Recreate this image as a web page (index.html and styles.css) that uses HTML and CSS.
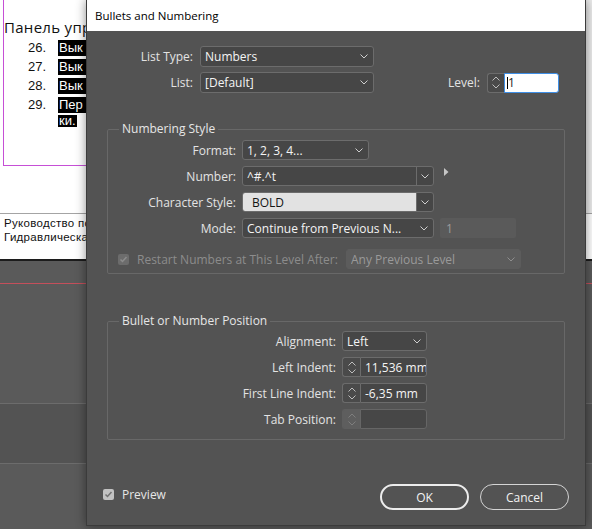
FILE: index.html
```html
<!DOCTYPE html>
<html lang="ru">
<head>
<meta charset="utf-8">
<title>Bullets and Numbering</title>
<link rel="stylesheet" href="styles.css">
</head>
<body>
<div class="desk">
  <div class="doc">
    <div class="page">
      <div class="frame">
        <p class="heading">Панель упр</p>
        <ol class="steps">
          <li><span class="num">26.</span><span class="txt"><span class="hl cut">Вык</span></span></li>
          <li><span class="num">27.</span><span class="txt"><span class="hl cut">Вык</span></span></li>
          <li><span class="num">28.</span><span class="txt"><span class="hl cut">Вык</span></span></li>
          <li><span class="num">29.</span><span class="txt"><span class="hl cut">Пер</span><span class="hl short">ки.</span></span></li>
        </ol>
      </div>
    </div>
    <div class="doc-foot">
      <p>Руководство по</p>
      <p>Гидравлическа</p>
    </div>
  </div>
  <div class="panel">
    <div class="band-a"></div>
    <div class="band-b"></div>
    <div class="band-c"></div>
  </div>

  <div class="dialog">
    <div class="titlebar">Bullets and Numbering</div>
    <div class="dlg-body">
      <div class="top">
        <div class="trow">
          <span class="tlabel">List Type:</span>
          <div class="select w174"><span class="val">Numbers</span><svg class="chev" width="8" height="5" viewBox="0 0 8 5"><path d="M0.5 0.5L4 4L7.5 0.5" fill="none" stroke="#cfcfcf"/></svg></div>
        </div>
        <div class="trow">
          <span class="tlabel">List:</span>
          <div class="select w174"><span class="val">[Default]</span><svg class="chev" width="8" height="5" viewBox="0 0 8 5"><path d="M0.5 0.5L4 4L7.5 0.5" fill="none" stroke="#cfcfcf"/></svg></div>
          <div class="level">
            <span class="lvl-label">Level:</span>
            <div class="spin">
              <span class="spin-btn s17"><svg width="8" height="5" viewBox="0 0 8 5"><path d="M0.5 4.5L4 1L7.5 4.5" fill="none" stroke="#bdbdbd"/></svg><svg width="8" height="5" viewBox="0 0 8 5"><path d="M0.5 0.5L4 4L7.5 0.5" fill="none" stroke="#bdbdbd"/></svg></span>
              <span class="spin-field focus w55"><span class="caret"></span>1</span>
            </div>
          </div>
        </div>
      </div>

      <fieldset class="group g1">
        <legend>Numbering Style</legend>
        <div class="frow">
          <span class="flabel">Format:</span>
          <div class="select w127"><span class="val">1, 2, 3, 4...</span><svg class="chev" width="8" height="5" viewBox="0 0 8 5"><path d="M0.5 0.5L4 4L7.5 0.5" fill="none" stroke="#cfcfcf"/></svg></div>
        </div>
        <div class="frow">
          <span class="flabel">Number:</span>
          <div class="combo"><span class="field">^#.^t</span><span class="drop"><svg width="8" height="5" viewBox="0 0 8 5"><path d="M0.5 0.5L4 4L7.5 0.5" fill="none" stroke="#cfcfcf"/></svg></span></div>
          <svg class="tri" width="5" height="8" viewBox="0 0 5 8"><path d="M0 0L4.5 4L0 8Z" fill="#c6c6c6"/></svg>
        </div>
        <div class="frow">
          <span class="flabel">Character Style:</span>
          <div class="combo"><span class="field light">BOLD</span><span class="drop"><svg width="8" height="5" viewBox="0 0 8 5"><path d="M0.5 0.5L4 4L7.5 0.5" fill="none" stroke="#cfcfcf"/></svg></span></div>
        </div>
        <div class="frow">
          <span class="flabel">Mode:</span>
          <div class="select w192"><span class="val">Continue from Previous N...</span><svg class="chev" width="8" height="5" viewBox="0 0 8 5"><path d="M0.5 0.5L4 4L7.5 0.5" fill="none" stroke="#cfcfcf"/></svg></div>
          <span class="dis-field">1</span>
        </div>
        <div class="frow restart">
          <span class="chk-label"><svg width="11" height="11" viewBox="0 0 11 11"><rect width="11" height="11" rx="2" fill="#6c6c6c"/><path d="M2.5 5.5L4.5 7.5L8.5 3" fill="none" stroke="#8c8c8c" stroke-width="1.5"/></svg><span>Restart Numbers at This Level After:</span></span>
          <div class="select dis w175"><span class="val">Any Previous Level</span><svg class="chev" width="8" height="5" viewBox="0 0 8 5"><path d="M0.5 0.5L4 4L7.5 0.5" fill="none" stroke="#8e8e8e"/></svg></div>
        </div>
      </fieldset>

      <fieldset class="group g2">
        <legend>Bullet or Number Position</legend>
        <div class="frow">
          <span class="flabel">Alignment:</span>
          <div class="select w85"><span class="val">Left</span><svg class="chev" width="8" height="5" viewBox="0 0 8 5"><path d="M0.5 0.5L4 4L7.5 0.5" fill="none" stroke="#cfcfcf"/></svg></div>
        </div>
        <div class="frow">
          <span class="flabel">Left Indent:</span>
          <div class="spin">
            <span class="spin-btn s18"><svg width="8" height="5" viewBox="0 0 8 5"><path d="M0.5 4.5L4 1L7.5 4.5" fill="none" stroke="#bdbdbd"/></svg><svg width="8" height="5" viewBox="0 0 8 5"><path d="M0.5 0.5L4 4L7.5 0.5" fill="none" stroke="#bdbdbd"/></svg></span>
            <span class="spin-field w67">11,536 mm</span>
          </div>
        </div>
        <div class="frow">
          <span class="flabel">First Line Indent:</span>
          <div class="spin">
            <span class="spin-btn s18"><svg width="8" height="5" viewBox="0 0 8 5"><path d="M0.5 4.5L4 1L7.5 4.5" fill="none" stroke="#bdbdbd"/></svg><svg width="8" height="5" viewBox="0 0 8 5"><path d="M0.5 0.5L4 4L7.5 0.5" fill="none" stroke="#bdbdbd"/></svg></span>
            <span class="spin-field w67">-6,35 mm</span>
          </div>
        </div>
        <div class="frow">
          <span class="flabel">Tab Position:</span>
          <div class="spin">
            <span class="spin-btn s18 off"><svg width="8" height="5" viewBox="0 0 8 5"><path d="M0.5 4.5L4 1L7.5 4.5" fill="none" stroke="#7e7e7e"/></svg><svg width="8" height="5" viewBox="0 0 8 5"><path d="M0.5 0.5L4 4L7.5 0.5" fill="none" stroke="#7e7e7e"/></svg></span>
            <span class="spin-field w67 empty"></span>
          </div>
        </div>
      </fieldset>

      <div class="footer">
        <span class="preview"><svg width="11" height="11" viewBox="0 0 11 11"><rect width="11" height="11" rx="2" fill="#c2c2c2"/><path d="M2.5 5.5L4.5 7.5L8.5 3" fill="none" stroke="#727272" stroke-width="1.5"/></svg><span>Preview</span></span>
        <span class="btn primary">OK</span>
        <span class="btn">Cancel</span>
      </div>
    </div>
  </div>
</div>
</body>
</html>
```

FILE: styles.css
```css
* { box-sizing: border-box; }
html, body { margin: 0; padding: 0; }
body {
  width: 592px;
  height: 529px;
  overflow: hidden;
  background: #5a5a5a;
  font-family: "Open Sans", "Noto Sans", sans-serif;
}
.desk { position: relative; width: 592px; height: 529px; overflow: hidden; }

/* background document */
.doc { background: #fff; border-bottom: 2px solid #1c1c1c; }
.page {
  height: 214px;
  border-bottom: 1px solid #a4a4a4;
  background: linear-gradient(to right, #fff 586px, #ececec 586px);
}
.frame {
  margin-left: 3px;
  width: 120px;
  height: 166px;
  background: #fff;
  border-left: 1px solid #c64fd6;
  border-bottom: 1px solid #c64fd6;
  padding-top: 18px;
}
.heading {
  margin: 0;
  font-size: 15px;
  letter-spacing: 0.3px;
  line-height: 19px;
  color: #111;
  white-space: nowrap;
}
.steps {
  list-style: none;
  margin: 3px 0 0;
  padding: 0 0 0 24px;
  font-family: "Liberation Sans", Arial, sans-serif;
  font-size: 13px;
  line-height: 16px;
  color: #111;
}
.steps li { display: flex; align-items: flex-start; margin-bottom: 3px; }
.num { width: 30px; flex: none; }
.txt { white-space: nowrap; display: flex; flex-direction: column; align-items: flex-start; }
.hl { display: inline-block; background: #000; color: #fff; padding: 0 1px; line-height: 16px; }
.hl.cut { width: 30px; }
.hl.short { line-height: 12px; margin-top: 2px; }
.doc-foot {
  height: 45px;
  padding: 3px 0 0 4px;
  font-family: "Liberation Sans", Arial, sans-serif;
  font-size: 11.5px;
  letter-spacing: 0.3px;
  line-height: 13.5px;
  color: #111;
  white-space: nowrap;
}
.doc-foot p { margin: 0; }

.panel { height: 268px; }
.band-a { height: 23px; border-bottom: 1px solid #c44f5b; }
.band-b { height: 120px; border-bottom: 1px solid #6c6c6c; }
.band-c { height: 60px; background: #535353; border-bottom: 1px solid #6c6c6c; }

/* dialog */
.dialog {
  position: absolute;
  left: 86px;
  top: 0;
  width: 500px;
  height: 526px;
  background: #535353;
  border: 1px solid #3b3b3b;
  border-top: 0;
  box-shadow: 0 0 10px rgba(0, 0, 0, 0.45);
  display: flex;
  flex-direction: column;
  font-size: 12px;
  color: #e3e3e3;
}
.titlebar {
  flex: none;
  height: 31px;
  background: #fff;
  color: #000;
  padding-left: 8px;
  display: flex;
  align-items: center;
  font-size: 11.5px;
}
.dlg-body { flex: 1; display: flex; flex-direction: column; padding-top: 15px; }

.top { padding-right: 26px; display: flex; flex-direction: column; gap: 5px; }
.trow { display: flex; align-items: center; height: 21px; }
.tlabel { width: 106px; text-align: right; margin-right: 7px; flex: none; }
.level { margin-left: auto; display: flex; align-items: center; }
.lvl-label { margin-right: 7px; }

.select {
  flex: none;
  display: flex;
  align-items: center;
  height: 21px;
  border: 1px solid #6c6c6c;
  border-radius: 3px;
  background: #464646;
  padding: 0 5px 0 4px;
  color: #f4f4f4;
}
.select .val { flex: 1; white-space: nowrap; overflow: hidden; }
.select .chev { flex: none; }
.select.dis { background: #5c5c5c; border-color: #5c5c5c; color: #9a9a9a; }
.w174 { width: 174px; }
.w127 { width: 127px; }
.w192 { width: 192px; }
.w175 { width: 175px; }
.w85 { width: 85px; }

.combo {
  flex: none;
  display: flex;
  width: 192px;
  height: 20px;
  border: 1px solid #6c6c6c;
  border-radius: 3px;
  background: #464646;
  overflow: hidden;
}
.combo .field {
  flex: 1;
  display: flex;
  align-items: center;
  padding-left: 4px;
  color: #f4f4f4;
  white-space: nowrap;
}
.combo .field.light { background: #e2e2e2; color: #141414; padding-left: 9px; }
.combo .drop {
  flex: none;
  width: 17px;
  border-left: 1px solid #6c6c6c;
  display: flex;
  align-items: center;
  justify-content: center;
}
.tri { margin-left: 10px; margin-top: -8px; }

.spin { display: flex; height: 20px; flex: none; }
.spin-btn {
  border: 1px solid #6c6c6c;
  border-right: 0;
  border-radius: 3px 0 0 3px;
  background: #4a4a4a;
  display: flex;
  flex-direction: column;
  align-items: center;
  justify-content: center;
  gap: 3px;
}
.spin-btn.off { background: #5e5e5e; border-color: #5e5e5e; }
.s17 { width: 17px; }
.s18 { width: 18px; }
.spin-field {
  border: 1px solid #6c6c6c;
  border-radius: 0 3px 3px 0;
  background: #464646;
  display: flex;
  align-items: center;
  padding-left: 4px;
  white-space: nowrap;
  overflow: hidden;
  color: #f4f4f4;
}
.spin-field.empty { background: #474747; border-color: #666; }
.spin-field.focus { background: #fff; border-color: #3f8fe6; color: #222; padding-left: 2px; }
.w55 { width: 55px; }
.w67 { width: 67px; }
.caret { display: inline-block; width: 1px; height: 12px; background: #000; }

.group {
  margin: 28px 20px 0;
  border: 1px solid #686868;
  border-radius: 2px;
  padding: 3px 11px 4px;
  min-width: 0;
}
.group legend { padding: 0 3px; font-size: 12px; line-height: 16px; color: #e6e6e6; }
.g2 { margin-top: 39px; padding-top: 2px; padding-bottom: 10px; }

.frow { display: flex; align-items: center; height: 20px; }
.frow + .frow { margin-top: 6px; }
.frow .select { height: 20px; }
.flabel { flex: none; width: 117px; text-align: right; margin-right: 6px; }
.g2 .flabel { width: 217px; }

.dis-field {
  flex: none;
  width: 76px;
  height: 20px;
  margin-left: 6px;
  border-radius: 2px;
  background: #5a5a5a;
  color: #9c9c9c;
  padding-left: 6px;
  display: flex;
  align-items: center;
}
.frow.restart { margin-top: 11px; }
.chk-label {
  flex: none;
  width: 228px;
  margin-left: -1px;
  display: flex;
  align-items: center;
  gap: 8px;
  color: #8c8c8c;
  white-space: nowrap;
}

.footer {
  margin-top: auto;
  display: flex;
  align-items: center;
  padding: 0 16px 15px;
}
.preview { margin-right: auto; margin-bottom: 5px; display: flex; align-items: center; gap: 8px; color: #e6e6e6; }
.btn {
  width: 89px;
  height: 26px;
  border-radius: 13px;
  border: 1px solid #d4d4d4;
  display: flex;
  align-items: center;
  justify-content: center;
  color: #f2f2f2;
  font-size: 12px;
}
.btn.primary { border: 2px solid #ececec; }
.btn + .btn { margin-left: 11px; }
```
